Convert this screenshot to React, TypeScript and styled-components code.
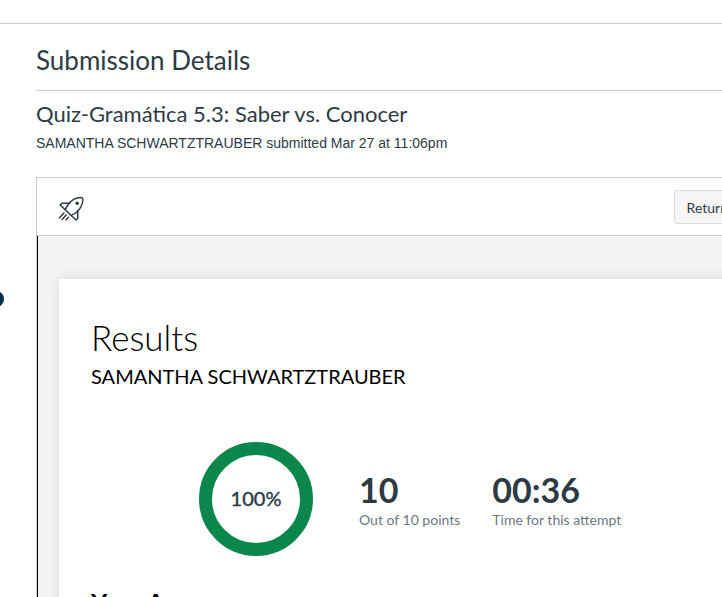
import React from "react";
import styled, { createGlobalStyle } from "styled-components";

const lato = `Lato, "Open Sans", sans-serif`;
const ink = "#2d3b45";
const line = "#c7cdd1";

const GlobalStyle = createGlobalStyle`
  *, *::before, *::after { box-sizing: border-box; }
  body { margin: 0; background: #fff; color: ${ink}; font-family: ${lato}; }
  h1, h2, h3, p, dl, dd { margin: 0; font-weight: 400; }
`;

const Page = styled.div`
  position: relative;
  display: flex;
  flex-direction: column;
  height: 100vh;
  overflow: hidden;
`;

const TopBar = styled.header`
  flex: none;
  height: 24px;
  border-bottom: 1px solid ${line};
`;

const NavHandle = styled.button`
  position: absolute;
  left: -12px;
  top: 291px;
  width: 16px;
  height: 16px;
  padding: 0;
  border: 0;
  border-radius: 50%;
  background: #002d54;
`;

/* The content column is wider than the window and runs off its right edge. */
const Content = styled.main`
  flex: 1;
  display: flex;
  flex-direction: column;
  margin: 0 -36px 0 36px;
`;

const PageTitle = styled.h1`
  padding: 18px 0 12px;
  border-bottom: 1px solid ${line};
  font-size: 26px;
  line-height: 36px;
`;

const QuizTitle = styled.h2`
  padding-top: 7px;
  font-size: 22px;
  line-height: 32px;
`;

const Submitted = styled.p`
  padding: 3px 0 24px;
  font-family: "Liberation Sans", Arial, sans-serif;
  font-size: 14px;
  line-height: 20px;
`;

const Frame = styled.section`
  flex: 1;
  display: flex;
  flex-direction: column;
  border: 1px solid ${line};
  border-bottom: 0;
`;

const Toolbar = styled.div`
  display: flex;
  align-items: center;
  justify-content: space-between;
  padding: 12px 16px 11px 21px;
  border-bottom: 1px solid ${line};
`;

const ReturnButton = styled.button`
  height: 34px;
  padding: 0 12px;
  border: 1px solid #d7dade;
  border-radius: 3px;
  background: #f5f5f5;
  color: ${ink};
  font-family: ${lato};
  font-size: 14px;
`;

const Backdrop = styled.div`
  flex: 1;
  padding: 43px 0 0 21px;
  border-left: 1px solid #000;
  background: #f4f4f4;
`;

const Card = styled.article`
  height: 100%;
  padding: 35px 32px;
  background: #fff;
  box-shadow: 0 0 12px rgba(0, 0, 0, 0.12);
  color: #000;
`;

const ResultsTitle = styled.h2`
  font-size: 35px;
  font-weight: 300;
  line-height: 46px;
`;

const Student = styled.p`
  font-size: 20px;
  line-height: 32px;
`;

const Summary = styled.div`
  display: flex;
  align-items: center;
  padding: 50px 0 30px 108px;
`;

const Ring = styled.svg`
  flex: none;
  width: 114px;
  height: 114px;
  margin-right: 46px;
`;

const Stats = styled.dl`
  display: flex;
  gap: 32px;
  padding-top: 4px;
  color: ${ink};
`;

const Stat = styled.div`
  display: flex;
  flex-direction: column-reverse;
  gap: 2px;
`;

const StatValue = styled.dd`
  font-size: 34px;
  font-weight: 700;
  line-height: 36px;
`;

const StatLabel = styled.dt`
  color: #6b7780;
  font-size: 14px;
  line-height: 20px;
`;

const AnswersTitle = styled.h3`
  font-size: 25px;
  font-weight: 700;
  line-height: 32px;
`;

function Rocket() {
  return (
    <svg
      width="28"
      height="28"
      viewBox="0 0 28 28"
      fill="none"
      stroke={ink}
      strokeWidth="1.5"
      strokeLinecap="round"
      strokeLinejoin="round"
      aria-hidden="true"
    >
      <path d="M7.2 16.6C9.6 11.6 14 6.2 19 4.9C21.4 4.3 23.7 4.4 24.4 5.1C25 5.8 24.9 8.2 24.2 10.6C22.8 15.4 18.5 20 13.2 22.4" />
      <path d="M11.6 10.2H4L2.2 12L18 27L19.8 25.2V17.6" />
      <circle cx="19.2" cy="10.2" r="1.7" fill={ink} stroke="none" />
      <path d="M6 20L1.4 24.8M8.2 22L4 26.4M10.4 24.2L8 26.7" />
    </svg>
  );
}

function ScoreRing({ percent }: { percent: number }) {
  const length = 2 * Math.PI * 50.5;
  return (
    <Ring viewBox="0 0 114 114" role="img" aria-label={`${percent}%`}>
      <circle
        cx="57"
        cy="57"
        r="50.5"
        fill="none"
        stroke="#0b874b"
        strokeWidth="13"
        strokeDasharray={`${(length * percent) / 100} ${length}`}
        transform="rotate(-90 57 57)"
      />
      <text
        x="57"
        y="64"
        textAnchor="middle"
        fontFamily="Lato, sans-serif"
        fontSize="20"
        fill={ink}
        stroke={ink}
        strokeWidth="0.4"
      >
        {percent}%
      </text>
    </Ring>
  );
}

const stats = [
  { value: "10", label: "Out of 10 points" },
  { value: "00:36", label: "Time for this attempt" },
];

export default function App() {
  return (
    <Page>
      <GlobalStyle />
      <TopBar />
      <NavHandle type="button" aria-label="Open navigation" />
      <Content>
        <PageTitle>Submission Details</PageTitle>
        <QuizTitle>Quiz-Gramática 5.3: Saber vs. Conocer</QuizTitle>
        <Submitted>SAMANTHA SCHWARTZTRAUBER submitted Mar 27 at 11:06pm</Submitted>
        <Frame>
          <Toolbar>
            <Rocket />
            <ReturnButton type="button">Return</ReturnButton>
          </Toolbar>
          <Backdrop>
            <Card>
              <ResultsTitle>Results</ResultsTitle>
              <Student>SAMANTHA SCHWARTZTRAUBER</Student>
              <Summary>
                <ScoreRing percent={100} />
                <Stats>
                  {stats.map((stat) => (
                    <Stat key={stat.label}>
                      <StatLabel>{stat.label}</StatLabel>
                      <StatValue>{stat.value}</StatValue>
                    </Stat>
                  ))}
                </Stats>
              </Summary>
              <AnswersTitle>Your Answers:</AnswersTitle>
            </Card>
          </Backdrop>
        </Frame>
      </Content>
    </Page>
  );
}
